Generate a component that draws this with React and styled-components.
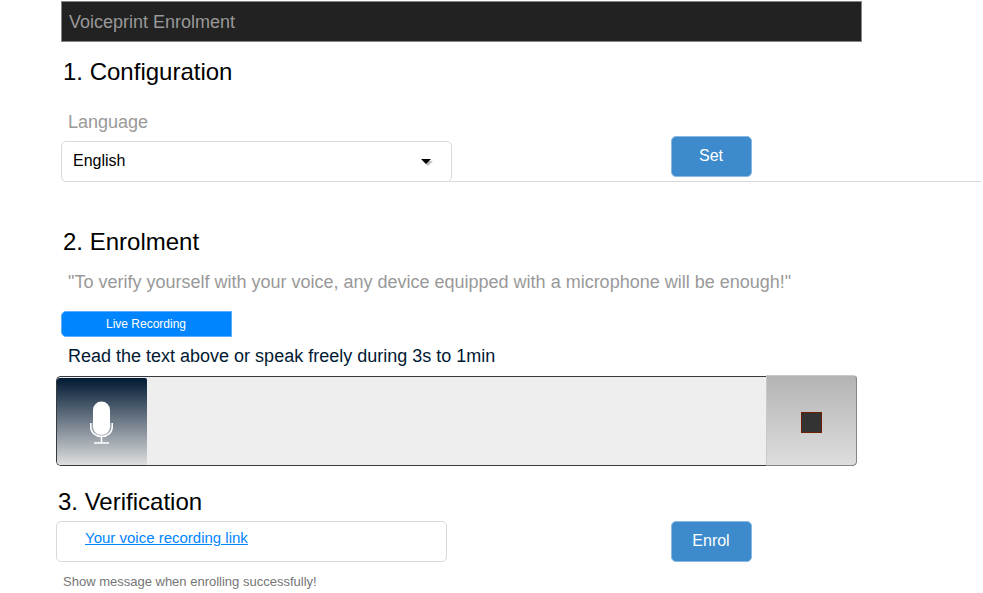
import React from "react";
import styled, { createGlobalStyle } from "styled-components";

const GlobalStyle = createGlobalStyle`
  *, *::before, *::after { box-sizing: border-box; }
  body {
    margin: 0;
    background: #fff;
    font-family: "Liberation Sans", Helvetica, Arial, sans-serif;
    color: #000;
  }
`;

const Page = styled.main`
  display: flow-root;
  width: 983px;
  height: 593px;
  overflow: hidden;
`;

const TitleBar = styled.header`
  width: 801px;
  height: 41px;
  margin: 1px 0 0 61px;
  padding-left: 7px;
  border: 1px solid #858585;
  background: #222;
  color: #999;
  font-size: 18px;
  line-height: 41px;
`;

const Heading = styled.h2`
  margin: ${(p) => p.$top || 0}px 0 ${(p) => p.$bottom || 0}px ${(p) => p.$indent || 63}px;
  font-size: 24px;
  font-weight: 400;
  line-height: ${(p) => p.$line || 60}px;
`;

const Label = styled.div`
  height: 34px;
  margin-left: 68px;
  color: #999;
  font-size: 18px;
  line-height: 40px;
`;

const ControlRow = styled.div`
  display: flex;
  align-items: flex-end;
  height: ${(p) => p.$height}px;
  margin-left: ${(p) => p.$indent}px;
`;

const Field = styled.div`
  display: flex;
  justify-content: space-between;
  width: 391px;
  height: 41px;
  border: 1px solid #d9d9d9;
  border-radius: 5px;
`;

const SelectValue = styled.span`
  padding-left: 11px;
  font-size: 16px;
  line-height: 38px;
`;

const Caret = styled.svg`
  width: 12px;
  height: 9px;
  margin: 16px 18px 0 0;
`;

const ActionArea = styled.div`
  width: ${(p) => p.$width}px;
  height: 100%;
  margin-left: ${(p) => (p.$ruled ? -3 : 0)}px;
  padding-left: ${(p) => p.$gap}px;
  border-bottom: ${(p) => (p.$ruled ? "1px solid #d9d9d9" : "none")};
`;

const Button = styled.button`
  display: block;
  width: 81px;
  height: 41px;
  padding: 0 1px 1px 0;
  border: 1px solid #89b9e2;
  border-radius: 5px;
  background: #3d8bcd;
  color: #fff;
  font: 16px/38px "Liberation Sans", Helvetica, Arial, sans-serif;
`;

const Quote = styled.p`
  margin: 0 0 0 68px;
  color: #999;
  font-size: 18px;
  line-height: 20px;
  white-space: nowrap;
`;

const Tab = styled.div`
  width: 171px;
  height: 26px;
  margin: 19px 0 0 61px;
  padding-right: 1px;
  border: 1px solid #5cafff;
  border-radius: 5px 0 0 5px;
  background: #0085ff;
  color: #fff;
  font-size: 12px;
  line-height: 24px;
  text-align: center;
`;

const Instruction = styled.p`
  margin: 0 0 1px 68px;
  color: #001933;
  font-size: 18px;
  line-height: 38px;
`;

const Recorder = styled.div`
  display: flex;
  justify-content: space-between;
  width: 801px;
  height: 90px;
  margin-left: 56px;
  border: 1px solid #36393d;
  border-right-color: #858585;
  border-radius: 5px;
  background: #eee;
`;

const MicPanel = styled.div`
  width: 90px;
  height: 87px;
  margin-top: 1px;
  border-radius: 3px 2px 2px 4px;
  background: linear-gradient(#001933, #dedede);
`;

const MicIcon = styled.svg`
  display: block;
  width: 24px;
  height: 44px;
  margin: 23px 0 0 33px;
`;

const StopPanel = styled.div`
  display: flex;
  align-items: center;
  justify-content: center;
  width: 91px;
  height: 91px;
  margin: -2px -1px 0 0;
  padding-top: 3px;
  border: 1px solid #c9c9c9;
  border-right-color: #858585;
  border-bottom-color: #858585;
  border-radius: 0 4px 5px 0;
  background: linear-gradient(#b3b3b3, #dedede);
`;

const StopIcon = styled.div`
  width: 21px;
  height: 21px;
  border: 1px solid #6d1f00;
  background: #333;
`;

const RecordingLink = styled.a`
  padding-left: 28px;
  color: #0085ff;
  font-size: 15px;
  line-height: 32px;
`;

const LinkText = styled.span`
  text-decoration: underline;
`;

const Message = styled.p`
  margin: 10px 0 0 63px;
  color: #757575;
  font-size: 13px;
  line-height: 20px;
`;

export default function App() {
  return (
    <>
      <GlobalStyle />
      <Page>
        <TitleBar>Voiceprint Enrolment</TitleBar>

        <Heading>1. Configuration</Heading>
        <Label>Language</Label>
        <ControlRow $height={46} $indent={61}>
          <Field>
            <SelectValue>English</SelectValue>
            <Caret viewBox="0 0 12 9">
              <path d="M2 3h10L7 8z" fill="#bdbdbd" />
              <path d="M0 1h10L5 6z" fill="#000" />
            </Caret>
          </Field>
          <ActionArea $width={532} $gap={222} $ruled>
            <Button>Set</Button>
          </ActionArea>
        </ControlRow>

        <Heading $top={30}>2. Enrolment</Heading>
        <Quote>
          "To verify yourself with your voice, any device equipped with a microphone will be enough!"
        </Quote>
        <Tab>Live Recording</Tab>
        <Instruction>Read the text above or speak freely during 3s to 1min</Instruction>
        <Recorder>
          <MicPanel>
            <MicIcon viewBox="0 0 24 44">
              <rect x="3" y="0.5" width="17" height="34" rx="8.5" fill="#fff" />
              <path
                d="M0.8 22v3.5C0.8 32 5.8 35.5 11.5 35.5S22.2 32 22.2 25.5V22M11.5 35.5V42M4 42h15"
                fill="none"
                stroke="#fff"
                strokeWidth="1.6"
              />
              <path
                d="M2.3 22v3c0 6 4 9 9.2 9s9.2-3 9.2-9v-3"
                fill="none"
                stroke="#b5bcc3"
                strokeWidth="0.7"
              />
            </MicIcon>
          </MicPanel>
          <StopPanel>
            <StopIcon />
          </StopPanel>
        </Recorder>

        <Heading $top={18} $bottom={2} $indent={58} $line={35}>3. Verification</Heading>
        <ControlRow $height={41} $indent={56}>
          <Field>
            <RecordingLink>
              <LinkText>Your voice recording link</LinkText>
            </RecordingLink>
          </Field>
          <ActionArea $width={305} $gap={224}>
            <Button>Enrol</Button>
          </ActionArea>
        </ControlRow>
        <Message>Show message when enrolling successfully!</Message>
      </Page>
    </>
  );
}
